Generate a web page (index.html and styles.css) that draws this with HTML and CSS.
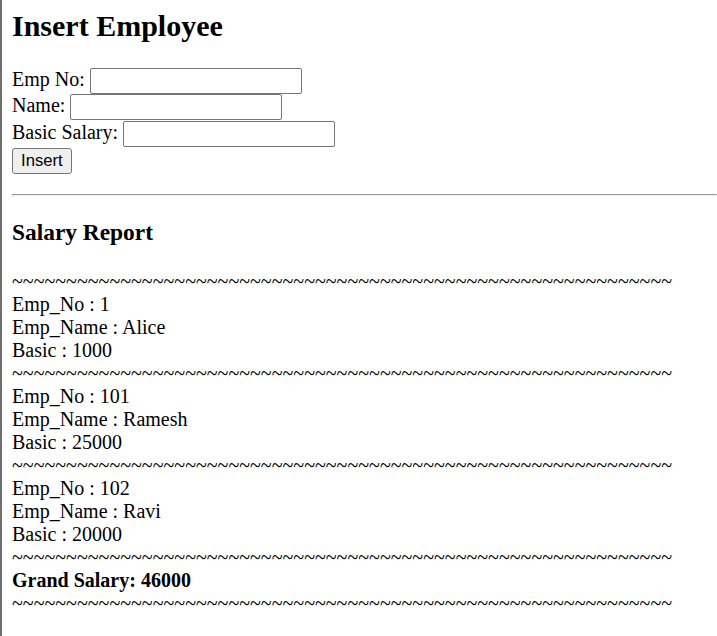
FILE: index.html
```html
<!DOCTYPE html>
<html lang="en">
<head>
    <meta charset="UTF-8">
    <meta name="viewport" content="width=device-width, initial-scale=1.0">
    <title>Insert Employee</title>
    <link rel="stylesheet" href="styles.css">
</head>
<body>
    <section class="page">
        <h1>Insert Employee</h1>

        <form class="emp-form">
            <div class="field">Emp No: <input type="text" name="empno"></div>
            <div class="field">Name: <input type="text" name="name"></div>
            <div class="field">Basic Salary: <input type="text" name="basic"></div>
            <div class="field"><button type="submit">Insert</button></div>
        </form>

        <hr>

        <h3>Salary Report</h3>

        <div class="report">
            <div class="sep">~~~~~~~~~~~~~~~~~~~~~~~~~~~~~~~~~~~~~~~~~~~~~~~~~~~~~~~~~~~~~</div>
            <div>Emp_No : 1</div>
            <div>Emp_Name : Alice</div>
            <div>Basic : 1000</div>
            <div class="sep">~~~~~~~~~~~~~~~~~~~~~~~~~~~~~~~~~~~~~~~~~~~~~~~~~~~~~~~~~~~~~</div>
            <div>Emp_No : 101</div>
            <div>Emp_Name : Ramesh</div>
            <div>Basic : 25000</div>
            <div class="sep">~~~~~~~~~~~~~~~~~~~~~~~~~~~~~~~~~~~~~~~~~~~~~~~~~~~~~~~~~~~~~</div>
            <div>Emp_No : 102</div>
            <div>Emp_Name : Ravi</div>
            <div>Basic : 20000</div>
            <div class="sep">~~~~~~~~~~~~~~~~~~~~~~~~~~~~~~~~~~~~~~~~~~~~~~~~~~~~~~~~~~~~~</div>
            <div class="total">Grand Salary: 46000</div>
            <div class="sep">~~~~~~~~~~~~~~~~~~~~~~~~~~~~~~~~~~~~~~~~~~~~~~~~~~~~~~~~~~~~~</div>
        </div>
    </section>
</body>
</html>
```

FILE: styles.css
```css
html {
    border-left: 2px solid #6f6f6f;
    min-height: 100%;
    box-sizing: border-box;
}

body {
    margin: 0 0 0 10px;
    font-family: 'Liberation Serif', 'Times New Roman', serif;
    font-size: 20px;
    color: #000;
    background: #fff;
}

h1 {
    font-size: 30px;
    font-weight: bold;
    margin: 9px 0 25px;
}

.emp-form {
    margin: 0 0 20px;
}

.field {
    height: 26.4px;
}

.field input {
    width: 212px;
    height: 26px;
    box-sizing: border-box;
    border: 1px solid #767676;
    border-radius: 2px;
    padding: 1px 2px;
    font-family: 'Liberation Sans', Arial, sans-serif;
    font-size: 16.67px;
    background: #fff;
}

.field button {
    height: 26px;
    box-sizing: border-box;
    border: 1px solid #767676;
    border-radius: 3px;
    padding: 1px 8px;
    background: #efefef;
    color: #000;
    font-family: 'Liberation Sans', Arial, sans-serif;
    font-size: 16.67px;
    margin-top: 1px;
}

hr {
    margin: 0 0 10px;
}

h3 {
    font-size: 23.4px;
    font-weight: bold;
    margin: 23px 0 24px;
}

.report div {
    white-space: nowrap;
}

.total {
    font-weight: bold;
}
```
